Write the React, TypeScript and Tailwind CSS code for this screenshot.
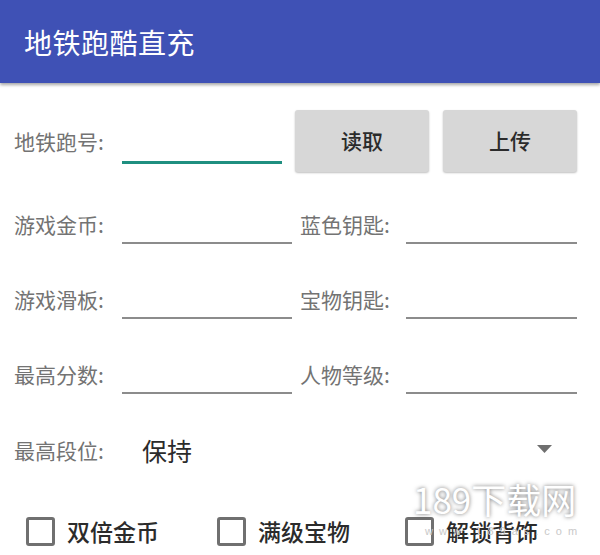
import React from 'react';

const font = { fontFamily: '"Noto Sans CJK SC", "Noto Sans", sans-serif' };

const Field = ({ label, width }: { label: string; width: string }) => (
  <div className="flex items-center">
    <span className="w-[108px] shrink-0 text-[21px] leading-none text-[#737373]">{label}</span>
    <div className={`h-[40px] border-b-2 border-[#8c8c8c] ${width}`} />
  </div>
);

const Check = ({ label, className }: { label: string; className: string }) => (
  <label className={`flex items-center ${className}`}>
    <span className="w-[29px] h-[29px] border-[3px] border-[#707070] rounded-[3px] shrink-0" />
    <span className="ml-[12px] text-[23px] leading-none text-[#2b2b2b] font-medium">{label}</span>
  </label>
);

const App: React.FC = () => {
  return (
    <div className="relative w-[600px] h-[555px] bg-white overflow-hidden" style={font}>
      {/* Toolbar */}
      <div className="h-[83px] bg-[#3f51b5] flex items-center pl-[24px] shadow-[0_2px_3px_rgba(0,0,0,0.35)]">
        <h1 className="text-[28px] leading-none text-white tracking-[0.5px]">地铁跑酷直充</h1>
      </div>

      <div className="pl-[14px]">
        {/* Row 1 */}
        <div className="flex items-center h-[62px] mt-[27px]">
          <span className="w-[108px] shrink-0 text-[21px] leading-none text-[#737373]">地铁跑号:</span>
          <div className="w-[160px] h-[40px] mt-[6px] border-b-[3px] border-[#1f8f80]" />
          <button className="ml-[13px] w-[134px] h-[62px] rounded-[3px] bg-[#d7d7d7] shadow-[0_1px_2px_rgba(0,0,0,0.25)] text-[21px] text-[#2b2b2b] font-medium">
            读取
          </button>
          <button className="ml-[14px] w-[134px] h-[62px] rounded-[3px] bg-[#d7d7d7] shadow-[0_1px_2px_rgba(0,0,0,0.25)] text-[21px] text-[#2b2b2b] font-medium">
            上传
          </button>
        </div>

        {/* Rows 2-4 */}
        <div className="flex flex-col gap-[35px] mt-[32px]">
          <div className="flex">
            <Field label="游戏金币:" width="w-[170px]" />
            <div className="ml-[8px] flex items-center">
              <span className="w-[106px] text-[21px] leading-none text-[#737373]">蓝色钥匙:</span>
              <div className="w-[171px] h-[40px] border-b-2 border-[#8c8c8c]" />
            </div>
          </div>
          <div className="flex">
            <Field label="游戏滑板:" width="w-[170px]" />
            <div className="ml-[8px] flex items-center">
              <span className="w-[106px] text-[21px] leading-none text-[#737373]">宝物钥匙:</span>
              <div className="w-[171px] h-[40px] border-b-2 border-[#8c8c8c]" />
            </div>
          </div>
          <div className="flex">
            <Field label="最高分数:" width="w-[170px]" />
            <div className="ml-[8px] flex items-center">
              <span className="w-[106px] text-[21px] leading-none text-[#737373]">人物等级:</span>
              <div className="w-[171px] h-[40px] border-b-2 border-[#8c8c8c]" />
            </div>
          </div>
        </div>

        {/* Spinner */}
        <div className="flex items-center h-[40px] mt-[36px]">
          <span className="w-[128px] shrink-0 text-[21px] leading-none text-[#737373]">最高段位:</span>
          <span className="text-[25px] leading-none text-[#2b2b2b]">保持</span>
          <svg className="ml-auto mr-[48px] mb-[3px]" width="15" height="8" viewBox="0 0 15 8">
            <path d="M0 0 H15 L7.5 8 Z" fill="#6f6f6f" />
          </svg>
        </div>

        {/* Checkboxes */}
        <div className="flex items-center h-[40px] mt-[41px] pl-[12px]">
          <Check label="双倍金币" className="w-[191px]" />
          <Check label="满级宝物" className="w-[188px]" />
          <Check label="解锁背饰" className="" />
        </div>
      </div>

      {/* Watermark */}
      <div className="absolute left-[413px] top-[481px] text-[35px] leading-none text-white [text-shadow:0_0_4px_rgba(0,0,0,0.55)] pointer-events-none">
        189下载网
      </div>
      <div className="absolute left-[425px] top-[526px] text-[11px] leading-none tracking-[6px] text-[#c9c9c9] pointer-events-none" style={{ fontFamily: '"Liberation Sans", sans-serif' }}>
        www.189as.com
      </div>
    </div>
  );
};

export default App;
